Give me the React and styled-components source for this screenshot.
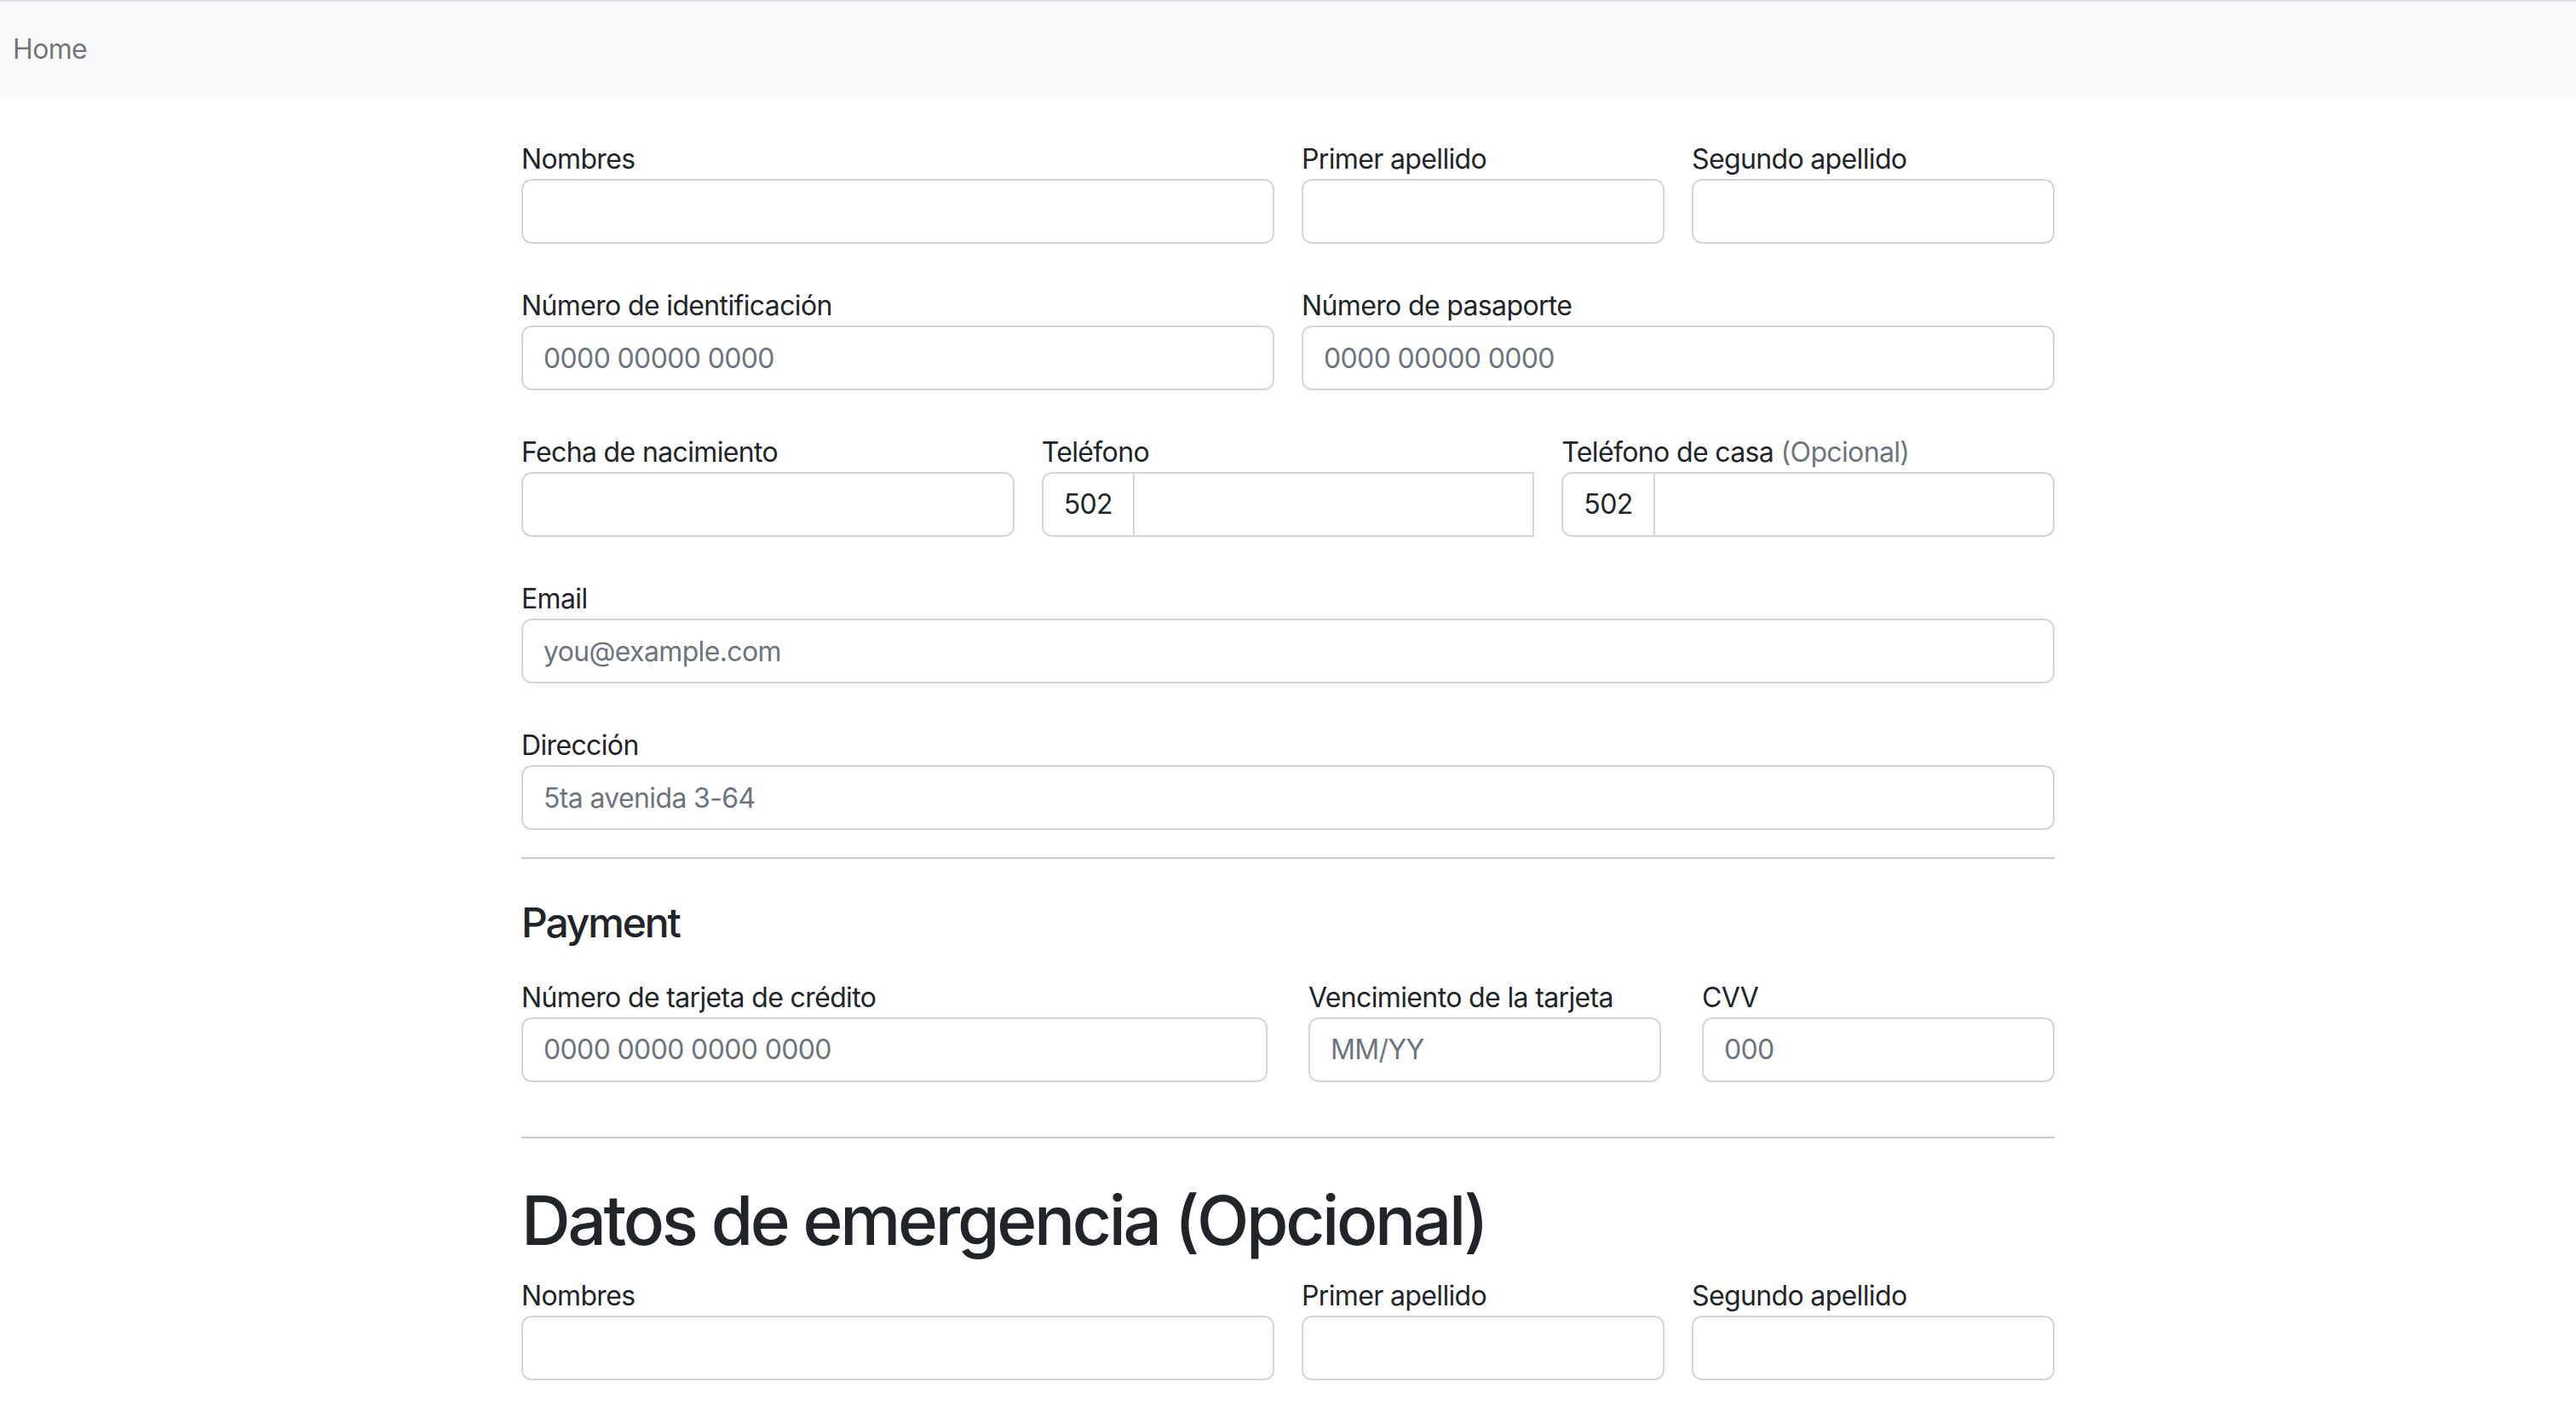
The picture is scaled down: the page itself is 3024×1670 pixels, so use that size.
import React from "react"
import styled, { createGlobalStyle } from "styled-components"

const GlobalStyle = createGlobalStyle`
  html, body {
    margin: 0;
    padding: 0;
    background: #fff;
  }
  body {
    font-family: Inter, "Noto Sans", "Liberation Sans", sans-serif;
    color: #212529;
    font-size: 32px;
    line-height: 1.5;
    letter-spacing: -0.02em;
  }
  * {
    box-sizing: border-box;
  }
`

const Nav = styled.nav`
  height: 114px;
  border-top: 2px solid #dcdde0;
  background: #f8f9fa;
  display: flex;
  align-items: center;
  padding-left: 15px;
`

const NavLink = styled.a`
  font-size: 32px;
  line-height: 48px;
  color: rgba(0, 0, 0, 0.55);
  text-decoration: none;
`

const Container = styled.main`
  width: 1800px;
  margin: 0 auto;
  padding-top: 48px;
  padding-bottom: 96px;
`

const Grid = styled.div`
  display: grid;
  grid-template-columns: repeat(12, 1fr);
  column-gap: ${(p) => p.$gutter || 32}px;
  row-gap: 48px;
`

const Col = styled.div`
  grid-column: span ${(p) => p.$span};
  min-width: 0;
`

const Label = styled.label`
  display: block;
  font-size: 32px;
  line-height: 50px;
  margin-bottom: -2px;
  color: #212529;
`

const Muted = styled.span`
  color: #6c757d;
`

const Input = styled.input`
  display: block;
  width: 100%;
  height: 76px;
  padding: 12px 24px;
  font-family: inherit;
  font-size: 32px;
  line-height: 48px;
  letter-spacing: -0.02em;
  color: #212529;
  background: #fff;
  border: 2px solid #d3d7dc;
  border-radius: 12px;
  outline: none;

  &::placeholder {
    color: #6c757d;
    opacity: 1;
  }
`

const InputGroup = styled.div`
  display: flex;
  width: 100%;
`

const Prefix = styled.span`
  display: flex;
  align-items: center;
  height: 76px;
  padding: 12px 24px;
  font-size: 32px;
  line-height: 48px;
  color: #212529;
  background: #fff;
  border: 2px solid #d3d7dc;
  border-radius: 12px 0 0 12px;
`

const GroupInput = styled(Input)`
  flex: 1;
  margin-left: -2px;
  border-radius: ${(p) => (p.$square ? "0" : "0 12px 12px 0")};
`

const Divider = styled.hr`
  border: 0;
  height: 2px;
  background: rgba(33, 37, 41, 0.25);
  margin: ${(p) => p.$top}px 0 ${(p) => p.$bottom}px;
`

const SectionTitle = styled.h4`
  margin: 0 0 34px;
  font-size: 48px;
  font-weight: 500;
  line-height: 1.2;
  letter-spacing: -0.045em;
`

const BigTitle = styled.h1`
  margin: 0 0 16px;
  font-size: 80px;
  font-weight: 500;
  line-height: 1.2;
  letter-spacing: -0.041em;
`

const Field = ({ span, label, placeholder, children }) => (
  <Col $span={span}>
    <Label>{label}</Label>
    {children || <Input type="text" placeholder={placeholder} />}
  </Col>
)

const Phone = ({ square }) => (
  <InputGroup>
    <Prefix>502</Prefix>
    <GroupInput type="text" $square={square} />
  </InputGroup>
)

const NameRow = () => (
  <>
    <Field span={6} label="Nombres" />
    <Field span={3} label="Primer apellido" />
    <Field span={3} label="Segundo apellido" />
  </>
)

export default function App() {
  return (
    <>
      <GlobalStyle />
      <Nav>
        <NavLink href="#">Home</NavLink>
      </Nav>
      <Container>
        <form>
          <Grid>
            <NameRow />
            <Field span={6} label="Número de identificación" placeholder="0000 00000 0000" />
            <Field span={6} label="Número de pasaporte" placeholder="0000 00000 0000" />
            <Field span={4} label="Fecha de nacimiento" />
            <Field span={4} label="Teléfono">
              <Phone square />
            </Field>
            <Field
              span={4}
              label={
                <>
                  Teléfono de casa <Muted>(Opcional)</Muted>
                </>
              }
            >
              <Phone />
            </Field>
            <Field span={12} label="Email" placeholder="you@example.com" />
            <Field span={12} label="Dirección" placeholder="5ta avenida 3-64" />
          </Grid>

          <Divider $top={32} $bottom={46} />

          <SectionTitle>Payment</SectionTitle>
          <Grid $gutter={48}>
            <Field span={6} label="Número de tarjeta de crédito" placeholder="0000 0000 0000 0000" />
            <Field span={3} label="Vencimiento de la tarjeta" placeholder="MM/YY" />
            <Field span={3} label="CVV" placeholder="000" />
          </Grid>

          <Divider $top={64} $bottom={48} />

          <BigTitle>Datos de emergencia (Opcional)</BigTitle>
          <Grid>
            <NameRow />
          </Grid>
        </form>
      </Container>
    </>
  )
}
